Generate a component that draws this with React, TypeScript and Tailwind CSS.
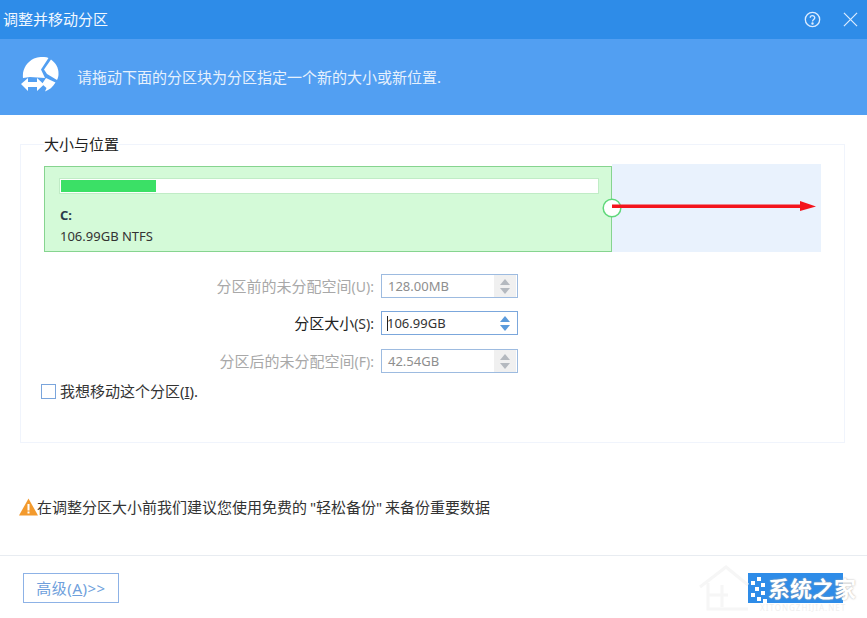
import React from "react";

const font = { fontFamily: '"Noto Sans", "Noto Sans CJK SC", sans-serif' };

function Spin({ active }: { active?: boolean }) {
  const c = active ? "#5b9bdc" : "#b4b9bf";
  return (
    <div className={`flex h-[22px] w-[22px] flex-col items-center justify-center gap-[3px] ${active ? "bg-white" : "bg-[#f0f0f0]"}`}>
      <svg width="10" height="6" viewBox="0 0 10 6"><path d="M5 0 L10 6 H0 Z" fill={c} /></svg>
      <svg width="10" height="6" viewBox="0 0 10 6"><path d="M0 0 H10 L5 6 Z" fill={c} /></svg>
    </div>
  );
}

function Row({ label, hot, value, active }: { label: string; hot: string; value: string; active?: boolean }) {
  return (
    <div className="flex h-[24px] items-center">
      <div className={`w-[337px] pr-[7px] text-right text-[15px] leading-none ${active ? "text-[#222]" : "text-[#a8a8a8]"}`}>
        {label}
        <span className={active ? "text-[14px] text-[#333]" : "text-[14px] text-[#a8a8a8]"}>{hot}</span>
      </div>
      <div className={`flex h-[24px] w-[137px] items-center justify-between border bg-white pr-[1px] ${active ? "border-[#7ba7dc]" : "border-[#9dbbe0]"}`}>
        <span className={`flex items-center pl-[6px] text-[13px] leading-none ${active ? "text-[#333]" : "text-[#8e8e8e]"}`}>
          {active && <span className="mr-[-1px] ml-[-1px] inline-block h-[15px] w-[1px] bg-[#222]" />}
          {value}
        </span>
        <Spin active={active} />
      </div>
    </div>
  );
}

const dots = [
  [2, 6], [8, 2], [12, 8], [6, 12], [12, 16], [2, 18], [8, 22], [14, 24],
];

export default function App() {
  return (
    <div className="flex h-[618px] w-[867px] flex-col overflow-hidden bg-white" style={font}>
      <header className="flex h-[39px] items-center justify-between bg-[#2e8ce8] pr-[9px] pl-[3px]">
        <span className="text-[15px] text-[#f2f8ff]">调整并移动分区</span>
        <div className="flex items-center gap-[22px]">
          <svg width="17" height="17" viewBox="0 0 18 18" fill="none" stroke="#dcecff" strokeWidth="1.4">
            <circle cx="9" cy="9" r="7.6" />
            <path d="M6.6 7.2 C6.6 4.2 11.4 4.2 11.4 7.2 C11.4 9 9 9 9 11" />
            <circle cx="9" cy="13.2" r="0.6" fill="#dcecff" />
          </svg>
          <svg width="15" height="15" viewBox="0 0 16 16" stroke="#dcecff" strokeWidth="1.3">
            <path d="M1 1 L15 15 M15 1 L1 15" />
          </svg>
        </div>
      </header>

      <div className="flex h-[76px] items-center bg-[#529ff2] pl-[20px]">
        <svg width="40" height="40" viewBox="0 0 40 40" fill="white">
          <path d="M14 1.5 C19 -0.5 25 -0.5 28.5 1 L21 12.5 L25 21 L10 20 L3 21 C2 12 7 5 14 1.5 Z" />
          <path d="M31 2.5 C36 6 38.5 11 38.5 16.5 C38.5 19 38 21 37 23 L27 17 L24 12.5 Z" />
          <path d="M35.5 25.5 C33 30 29 33 25 34.5 L26.5 31 L22 27 L26 21 Z" />
          <path d="M1 27 L8 21 V25 H17 V21 L24 27.5 L17 34 V30 H8 V34 Z" />
        </svg>
        <span className="ml-[17px] text-[15px] text-[#e6f1fd]">请拖动下面的分区块为分区指定一个新的大小或新位置.</span>
      </div>

      <main className="flex-1 px-[20px] pt-[19px]">
        <fieldset className="h-[309px] w-[824px] border border-[#f0f4fc] pr-[23px] pl-[23px]">
          <legend className="text-[15px] leading-[20px] text-[#222]">大小与位置</legend>

          <div className="mt-[10px] flex h-[88px] w-[777px]">
            <div className="relative mt-[2px] flex h-[86px] w-[568px] flex-col border border-[#86d48f] bg-[#d4fad8] pt-[11px] pl-[14px]">
              <div className="flex h-[16px] w-[540px] items-center border border-[#c0ecc6] bg-white pl-[1px]">
                <div className="h-[12px] w-[95px] bg-[#3be066]" />
              </div>
              <div className="mt-[11px] pl-[1px] text-[13px] leading-[20px] font-bold text-[#2b3a4a]">C:</div>
              <div className="mt-[1px] pl-[1px] text-[13px] leading-[20px] text-[#333]">106.99GB NTFS</div>
            </div>
            <div className="relative flex-1 bg-[#e9f2fd]">
              <svg className="absolute top-[33px] left-[-10px]" width="216" height="22" viewBox="0 0 216 22">
                <circle cx="10" cy="11" r="8.8" fill="white" stroke="#5fd87a" strokeWidth="1.5" />
                <path d="M10 7.5 H198 V4 L214 9.5 L198 14 V11 H10 Z" fill="#f4141c" />
              </svg>
            </div>
          </div>

          <div className="mt-[22px] flex flex-col gap-[13px]">
            <Row label="分区前的未分配空间" hot="(U):" value="128.00MB" />
            <Row label="分区大小" hot="(S):" value="106.99GB" active />
            <div className="mt-[1px]">
              <Row label="分区后的未分配空间" hot="(F):" value="42.54GB" />
            </div>
          </div>

          <label className="mt-[9px] ml-[-3px] flex h-[18px] items-center gap-[4px] text-[15px] leading-none text-[#333]">
            <span className="h-[15px] w-[15px] border-[1.5px] border-[#7aa5dc] bg-white" />
            <span>我想移动这个分区(<span className="underline">I</span>).</span>
          </label>
        </fieldset>

        <div className="mt-[54px] flex h-[20px] items-center text-[15px] leading-none text-[#333]">
          <svg className="ml-[-1px]" width="19" height="18" viewBox="0 0 19 18">
            <path d="M9.5 0.5 L19 17.5 H0 Z" fill="#f39a2d" />
            <rect x="8.5" y="6" width="2" height="6.5" fill="#fff" />
            <rect x="8.5" y="13.5" width="2" height="2" fill="#fff" />
          </svg>
          <span className="ml-[-1px] [word-spacing:-1px]">在调整分区大小前我们建议您使用免费的 "轻松备份" 来备份重要数据</span>
        </div>
      </main>

      <footer className="flex h-[63px] items-start justify-between border-t border-[#e8ecf1] pt-[17px] pr-[24px] pl-[23px]">
        <button className="flex h-[30px] w-[96px] items-center justify-center border border-[#8db2e6] bg-white text-[15px] leading-none tracking-[0.5px] text-[#6f9fdc]">
          高级(<span className="underline">A</span>)&gt;&gt;
        </button>
        <div className="relative h-[30px] w-[95px] bg-[#2e8ce8]">
          <svg className="absolute top-[-10px] left-[-50px]" width="52" height="50" viewBox="0 0 52 50" fill="none" stroke="#f6f6f6" strokeWidth="3">
            <path d="M2 24 L28 4 L50 22 M10 20 V46 H50 M10 32 H30 M24 22 V44" />
          </svg>
          <svg className="absolute top-[2px] left-[1px]" width="18" height="28" viewBox="0 0 18 28" fill="white">
            {dots.map(([x, y]) => (
              <rect key={`${x}-${y}`} x={x} y={y} width="4" height="4" />
            ))}
          </svg>
          <span className="absolute top-0 left-[20px] text-[22px] leading-[30px] font-bold whitespace-nowrap text-white [text-shadow:0_0_2px_#aaa]">
            系统之家
          </span>
          <span className="absolute top-[30px] left-[12px] text-[8px] leading-[10px] tracking-[1px] whitespace-nowrap text-[#efefef]">
            XITONGZHIJIA.NET
          </span>
        </div>
      </footer>
    </div>
  );
}
